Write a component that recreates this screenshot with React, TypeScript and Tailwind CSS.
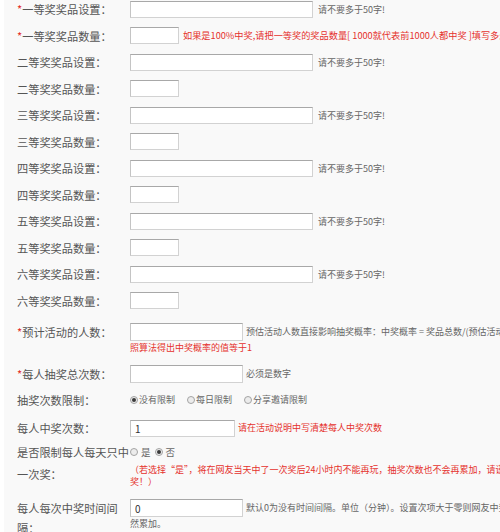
import React from "react";

const RED = "text-[#e5322d]";

function Label({ text, req }: { text: string; req?: boolean }) {
  return (
    <div className="w-[113px] shrink-0 text-[11.2px] leading-[18px] text-[#555]">
      {req && <span className={RED}>*</span>}
      {text}
    </div>
  );
}

function Field({ className, value }: { className: string; value?: string }) {
  return (
    <input
      readOnly
      defaultValue={value}
      className={`box-border shrink-0 border border-[#d2d2d2] border-t-[#a8a8a8] border-l-[#c4c4c4] bg-white px-[4px] text-[10px] text-[#333] outline-none ${className}`}
    />
  );
}

function Radio({ on }: { on?: boolean }) {
  return (
    <span className="inline-flex h-[8px] w-[8px] shrink-0 items-center justify-center rounded-full border border-[#a3a3a3] bg-[#ececec]">
      {on && <span className="h-[4px] w-[4px] rounded-full bg-[#3a3a3a]" />}
    </span>
  );
}

const prizes = ["一", "二", "三", "四", "五", "六"];

export default function App() {
  return (
    <div className="h-[532px] w-[500px] overflow-hidden border-l-[4px] border-l-white bg-[#f9f9f9] pl-[13px] font-['Noto_Sans_CJK_SC',sans-serif]">
      <div className="-mt-[4px] flex flex-col">
        {prizes.map((p, i) => (
          <React.Fragment key={p}>
            <div className="flex h-[26.5px] items-center">
              <Label text={`${p}等奖奖品设置：`} req={i === 0} />
              <Field className="h-[17px] w-[183px]" />
              <span className="ml-[5px] whitespace-nowrap text-[9px] text-[#666]">请不要多于50字!</span>
            </div>
            <div className="flex h-[26.5px] items-center">
              <Label text={`${p}等奖奖品数量：`} req={i === 0} />
              <Field className="h-[17px] w-[49px]" />
              {i === 0 && (
                <span className={`ml-[4px] whitespace-nowrap text-[9.2px] ${RED}`}>
                  如果是100%中奖,请把一等奖的奖品数量[ 1000就代表前1000人都中奖 ]填写多少人中奖
                </span>
              )}
            </div>
          </React.Fragment>
        ))}
      </div>

      {/* 预计活动的人数 */}
      <div className="mt-[9px] flex items-start">
        <Label text="预计活动的人数：" req />
        <div className="flex flex-col">
          <div className="flex h-[18px] items-center">
            <Field className="h-[18px] w-[113px]" />
            <span className="ml-[3px] whitespace-nowrap text-[9px] text-[#666]">
              预估活动人数直接影响抽奖概率：中奖概率 = 奖品总数/(预估活动人数*每人抽奖总次数)，如果要确保100%中奖，可按
            </span>
          </div>
          <div className={`whitespace-nowrap text-[9px] leading-[14px] ${RED}`}>照算法得出中奖概率的值等于1</div>
        </div>
      </div>

      {/* 每人抽奖总次数 */}
      <div className="mt-[10px] flex items-center">
        <Label text="每人抽奖总次数：" req />
        <Field className="h-[18px] w-[113px]" />
        <span className="ml-[3px] whitespace-nowrap text-[9px] text-[#666]">必须是数字</span>
      </div>

      {/* 抽奖次数限制 */}
      <div className="mt-[8px] flex items-center">
        <Label text="抽奖次数限制：" />
        <div className="flex items-center gap-[12px] text-[9px] text-[#666]">
          <span className="flex items-center gap-[1px]">
            <Radio on />
            没有限制
          </span>
          <span className="flex items-center gap-[1px]">
            <Radio />
            每日限制
          </span>
          <span className="flex items-center gap-[1px]">
            <Radio />
            分享邀请限制
          </span>
        </div>
      </div>

      {/* 每人中奖次数 */}
      <div className="mt-[10px] flex items-center">
        <Label text="每人中奖次数：" />
        <Field className="h-[17px] w-[105px]" value="1" />
        <span className={`ml-[3px] whitespace-nowrap text-[9px] ${RED}`}>请在活动说明中写清楚每人中奖次数</span>
      </div>

      {/* 是否限制每人每天只中一次奖 */}
      <div className="mt-[4px] flex items-start">
        <div className="w-[113px] shrink-0 text-[11.2px] leading-[22px] text-[#555]">是否限制每人每天只中一次奖：</div>
        <div className="flex flex-col">
          <div className="flex h-[22px] items-center gap-[4px] text-[9.5px] text-[#666]">
            <span className="flex items-center gap-[3px]">
              <Radio />
              是
            </span>
            <span className="flex items-center gap-[3px]">
              <Radio on />
              否
            </span>
          </div>
          <div className={`mt-[1px] whitespace-nowrap text-[9px] leading-[12px] ${RED}`}>
            （若选择“是”，将在网友当天中了一次奖后24小时内不能再玩，抽奖次数也不会再累加，请谨慎选择该项，确认后当天将不能再中
          </div>
          <div className={`text-[9px] leading-[12px] ${RED}`}>奖！）</div>
        </div>
      </div>

      {/* 每人每次中奖时间间隔 */}
      <div className="mt-[10px] flex items-start">
        <div className="w-[113px] shrink-0 text-[11.2px] leading-[20px] text-[#555]">每人每次中奖时间间隔：</div>
        <div className="flex flex-col">
          <div className="mt-[1px] flex h-[18px] items-center">
            <Field className="h-[18px] w-[113px]" value="0" />
            <span className="ml-[3px] whitespace-nowrap text-[9px] text-[#666]">
              默认0为没有时间间隔。单位（分钟）。设置次项大于零则网友中奖后在该时间内不能再次抽奖，抽奖次数依
            </span>
          </div>
          <div className="text-[9px] leading-[14px] text-[#666]">然累加。</div>
        </div>
      </div>
    </div>
  );
}
